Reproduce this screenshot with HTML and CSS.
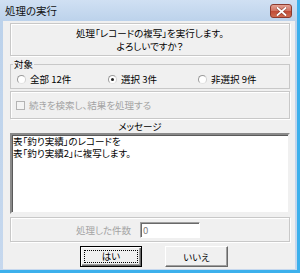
FILE: index.html
```html
<!DOCTYPE html>
<html lang="ja">
<head>
  <meta charset="UTF-8" />
  <title>処理の実行</title>
  <link rel="stylesheet" href="styles.css">
</head>
<body>

<div class="window">
  <div class="titlebar">
    <span class="title">処理の実行</span>
    <span class="close">
      <svg width="11" height="9" viewBox="0 0 11 9">
        <path d="M1.5 1 L9.5 8 M9.5 1 L1.5 8" stroke="#6e2a20" stroke-width="3.2" stroke-linecap="square" opacity="0.55"/>
        <path d="M1.5 1 L9.5 8 M9.5 1 L1.5 8" stroke="#fff" stroke-width="1.8" stroke-linecap="square"/>
      </svg>
    </span>
  </div>

  <div class="client">
    <div class="panel prompt">
      <p>処理「レコードの複写」を実行します。</p>
      <p>よろしいですか？</p>
    </div>

    <fieldset class="group">
      <legend>対象</legend>
      <label class="radio"><span class="circle"></span>全部 12件</label>
      <label class="radio"><span class="circle checked"></span>選択 3件</label>
      <label class="radio"><span class="circle"></span>非選択 9件</label>
    </fieldset>

    <div class="panel option">
      <label class="check disabled"><span class="box"></span>続きを検索し、結果を処理する</label>
    </div>

    <div class="memo-label">メッセージ</div>
    <div class="memo">
      <div class="memo-line">表「釣り実績」のレコードを</div>
      <div class="memo-line">表「釣り実績2」に複写します。</div>
    </div>

    <div class="panel count">
      <span class="count-label">処理した件数</span>
      <span class="field">0</span>
    </div>

    <div class="buttons">
      <button class="btn default"><span class="focus">はい</span></button>
      <button class="btn">いいえ</button>
    </div>
  </div>
</div>

</body>
</html>
```

FILE: styles.css
```css
* {
  box-sizing: border-box;
}
body {
  margin: 0;
  font-family: "Noto Sans CJK JP", sans-serif;
  font-size: 9.5px;
  font-feature-settings: "palt";
  color: #000;
}
.window {
  width: 300px;
  height: 273px;
  background: linear-gradient(#d0e0f3, #bcd2eb 21px, #c6d8ee);
  border-right: 3px solid #3cb0ec;
  border-bottom: 3px solid #3cb0ec;
  padding: 0 2px 1px 3px;
}
.titlebar {
  height: 21px;
  display: flex;
  align-items: flex-start;
  padding-left: 2px;
}
.title {
  font-size: 10.5px;
  line-height: 21px;
  color: #111;
}
.close {
  margin: 4px 3px 0 auto;
  width: 22px;
  height: 14px;
  border: 1px solid #8c3a2e;
  border-radius: 3px;
  background: linear-gradient(#e3a294, #d0705f 50%, #c04a35 51%, #cf6b50);
  display: flex;
  align-items: center;
  justify-content: center;
}
.close svg {
  display: block;
}
.client {
  height: 248px;
  background-color: #f0f0f0;
  padding: 2px 5px 0 7px;
  display: flex;
  flex-direction: column;
}
.panel {
  border: 1px solid #c8c8c8;
  box-shadow: inset 1px 1px 0 #fff, 1px 1px 0 #fff;
}
.prompt {
  height: 33px;
  padding-top: 3px;
  text-align: center;
  line-height: 13px;
}
.prompt p {
  margin: 0;
}
.group {
  margin: 2px 0 0;
  padding: 3px 6px 3px 6px;
  border: 1px solid #c8c8c8;
  min-width: 0;
  display: grid;
  grid-template-columns: 91px 90px 1fr;
}
.group legend {
  padding: 0 1px;
  margin-left: -4px;
  line-height: 12px;
}
.radio {
  display: flex;
  align-items: center;
  gap: 4px;
  height: 12px;
}
.circle {
  width: 9px;
  height: 9px;
  border-radius: 50%;
  border: 1px solid #9a9a9a;
  border-right-color: #d0d0d0;
  border-bottom-color: #e4e4e4;
  background: #fff;
  position: relative;
}
.circle.checked::after {
  content: "";
  position: absolute;
  left: 2px;
  top: 2px;
  width: 3px;
  height: 3px;
  border-radius: 50%;
  background: #222;
}
.option {
  margin-top: 2px;
  height: 28px;
  display: flex;
  align-items: center;
  padding-left: 5px;
}
.check {
  display: flex;
  align-items: center;
  gap: 4px;
}
.check .box {
  width: 9px;
  height: 9px;
  border: 1px solid #b4b4b4;
  background: #f4f4f4;
}
.disabled {
  color: #a3a3a3;
}
.memo-label {
  height: 13px;
  line-height: 13px;
  margin-top: 1px;
  text-align: center;
  padding-right: 20px;
}
.memo {
  height: 81px;
  background: #fff;
  border: 2px solid;
  border-color: #8a8a8a #f0f0f0 #f0f0f0 #8a8a8a;
  box-shadow: inset 1px 1px 0 #5a5a5a;
  padding: 0 0 0 1px;
}
.memo-line {
  line-height: 12px;
}
.count {
  margin-top: 3px;
  height: 25px;
  display: flex;
  align-items: center;
}
.count-label {
  width: 120px;
  text-align: right;
  margin-right: 9px;
  color: #a3a3a3;
}
.field {
  width: 60px;
  height: 16px;
  background: #fff;
  border: 1px solid #a0a0a0;
  border-right-color: #fff;
  border-bottom-color: #fff;
  box-shadow: inset 1px 1px 0 #696969;
  color: #808080;
  padding-left: 2px;
  line-height: 14px;
}
.buttons {
  margin-top: 4px;
  padding-left: 70px;
  display: flex;
  gap: 23px;
}
.btn {
  width: 63px;
  height: 21px;
  padding: 0;
  font: inherit;
  color: #000;
  background: #f0f0f0;
  border: 1px solid;
  border-color: #fff #696969 #696969 #fff;
  box-shadow: inset -1px -1px 0 #a0a0a0;
}
.btn.default {
  width: 62px;
  border: 1px solid #000;
  box-shadow: inset 1px 1px 0 #fff, inset -1px -1px 0 #696969, inset -2px -2px 0 #a0a0a0;
  padding: 3px;
}
.focus {
  display: block;
  height: 100%;
  border: 1px dotted #000;
  line-height: 11px;
}
```
